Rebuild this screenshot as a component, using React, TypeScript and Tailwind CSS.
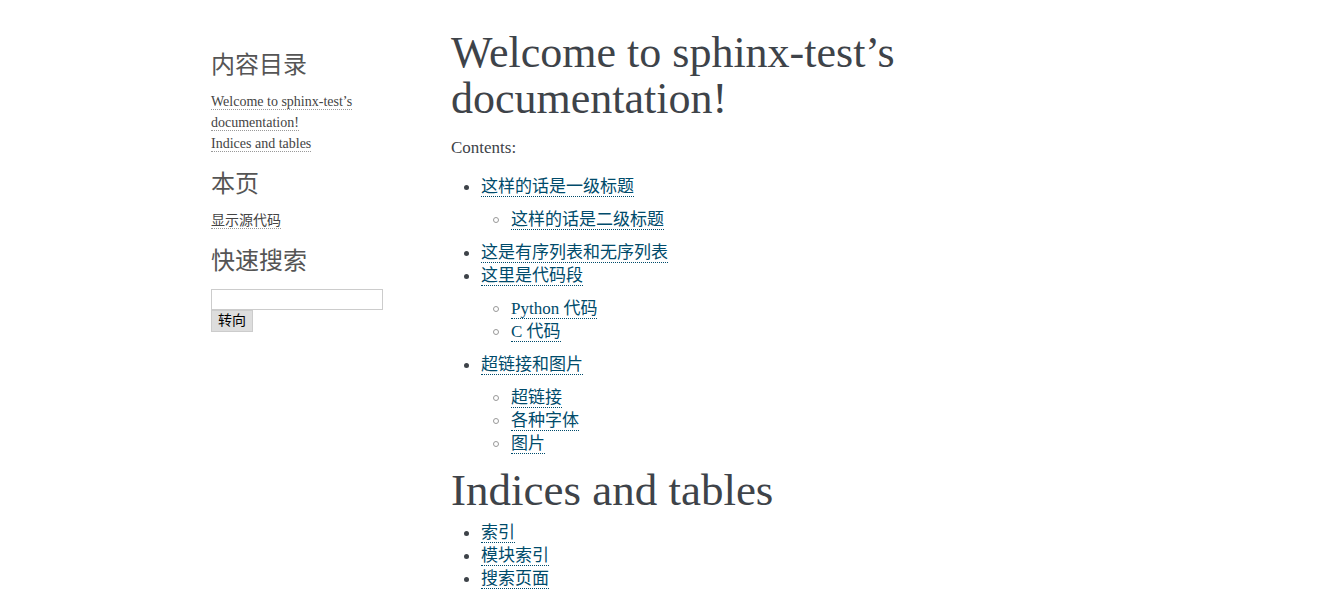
import React from 'react';

const serif = "font-['Liberation_Serif','Noto_Sans_CJK_SC',serif]";

const toc: { title: string; children?: string[] }[] = [
  { title: '这样的话是一级标题', children: ['这样的话是二级标题'] },
  { title: '这是有序列表和无序列表' },
  { title: '这里是代码段', children: ['Python 代码', 'C 代码'] },
  { title: '超链接和图片', children: ['超链接', '各种字体', '图片'] },
];

const indices = ['索引', '模块索引', '搜索页面'];

const Link: React.FC<{ children: React.ReactNode }> = ({ children }) => (
  <a href="#" className="text-[#004B6B] border-b border-dotted border-[#004B6B] font-['Liberation_Serif','Noto_Sans_CJK_SC',serif]">
    {children}
  </a>
);

const Disc = () => (
  <span className="w-[30px] shrink-0 flex justify-center">
    <span className="w-[5px] h-[5px] rounded-full bg-[#3E4349] mt-[10px]" />
  </span>
);

const Circle = () => (
  <span className="w-[30px] shrink-0 flex justify-center">
    <span className="w-[6px] h-[6px] rounded-full border border-[#999] mt-[9px]" />
  </span>
);

const SideLink: React.FC<{ children: React.ReactNode }> = ({ children }) => (
  <a href="#" className="text-[#444] border-b border-dotted border-[#999]">
    {children}
  </a>
);

export default function App() {
  return (
    <div className={`min-h-[614px] bg-white text-[#3E4349] ${serif}`}>
      <div className="flex pl-[201px]">
        {/* sidebar */}
        <div className="w-[220px] shrink-0 px-[10px] pt-[51px]">
          <h3 className="text-[24px] leading-[28px] text-[#555] font-normal">内容目录</h3>
          <ul className="mt-[12px] text-[14px] leading-[21px]">
            <li>
              <SideLink>Welcome to sphinx-test’s documentation!</SideLink>
            </li>
            <li>
              <SideLink>Indices and tables</SideLink>
            </li>
          </ul>
          <h3 className="mt-[16px] text-[24px] leading-[28px] text-[#555] font-normal">本页</h3>
          <ul className="mt-[12px] text-[14px] leading-[21px]">
            <li>
              <SideLink>显示源代码</SideLink>
            </li>
          </ul>
          <h3 className="mt-[16px] text-[24px] leading-[28px] text-[#555] font-normal">快速搜索</h3>
          <form className="mt-[14px] flex flex-col items-start">
            <input type="text" className="w-[172px] h-[21px] border border-[#ccc] bg-white" />
            <button type="button" className="h-[22px] w-[42px] bg-[#ddd] border border-[#ccc] text-[14px] leading-[18px] text-black">
              转向
            </button>
          </form>
        </div>

        {/* body */}
        <div className="w-[720px] px-[30px] pt-[30px]">
          <h1 className="text-[44px] leading-[46px] font-normal">Welcome to sphinx-test’s documentation!</h1>
          <p className="mt-[16px] text-[17px] leading-[20px]">Contents:</p>
          <ul className="mt-[17px] text-[17px] leading-[23px]">
            {toc.map((item) => (
              <li key={item.title}>
                <div className="flex">
                  <Disc />
                  <span>
                    <Link>{item.title}</Link>
                  </span>
                </div>
                {item.children && (
                  <ul className="pl-[30px] my-[10px]">
                    {item.children.map((c) => (
                      <li key={c} className="flex">
                        <Circle />
                        <span>
                          <Link>{c}</Link>
                        </span>
                      </li>
                    ))}
                  </ul>
                )}
              </li>
            ))}
          </ul>
          <h2 className="mt-[12px] text-[45px] leading-[46px] font-normal">Indices and tables</h2>
          <ul className="mt-[8px] text-[17px] leading-[23px]">
            {indices.map((i) => (
              <li key={i} className="flex">
                <Disc />
                <span>
                  <Link>{i}</Link>
                </span>
              </li>
            ))}
          </ul>
        </div>
      </div>
    </div>
  );
}
